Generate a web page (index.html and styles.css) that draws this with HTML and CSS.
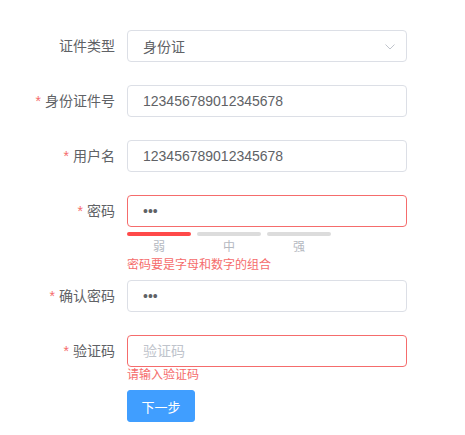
FILE: index.html
```html
<!DOCTYPE html>
<html lang="zh-CN">
<head>
<meta charset="utf-8">
<title>注册</title>
<link rel="stylesheet" href="styles.css">
</head>
<body>
<form class="form">
  <div class="form-item">
    <label class="label">证件类型</label>
    <div class="content">
      <div class="select">
        <input class="input" type="text" value="身份证" readonly>
        <svg class="chevron" width="10" height="6" viewBox="0 0 10 6"><path d="M0.5 0.5 L5 5 L9.5 0.5" fill="none" stroke="#c0c4cc" stroke-width="1"/></svg>
      </div>
    </div>
  </div>
  <div class="form-item">
    <label class="label"><span class="star">*</span>身份证件号</label>
    <div class="content">
      <input class="input" type="text" value="123456789012345678">
    </div>
  </div>
  <div class="form-item">
    <label class="label"><span class="star">*</span>用户名</label>
    <div class="content">
      <input class="input" type="text" value="123456789012345678">
    </div>
  </div>
  <div class="form-item">
    <label class="label"><span class="star">*</span>密码</label>
    <div class="content">
      <input class="input is-error" type="password" value="123">
      <div class="strength">
        <div class="level"><div class="bar bar-on"></div><div class="level-text">弱</div></div>
        <div class="level"><div class="bar"></div><div class="level-text">中</div></div>
        <div class="level"><div class="bar"></div><div class="level-text">强</div></div>
      </div>
      <div class="error">密码要是字母和数字的组合</div>
    </div>
  </div>
  <div class="form-item">
    <label class="label"><span class="star">*</span>确认密码</label>
    <div class="content">
      <input class="input" type="password" value="123">
    </div>
  </div>
  <div class="form-item">
    <label class="label"><span class="star">*</span>验证码</label>
    <div class="content">
      <input class="input is-error" type="text" placeholder="验证码">
      <div class="error">请输入验证码</div>
    </div>
  </div>
  <div class="form-item form-actions">
    <div class="label"></div>
    <div class="content">
      <button class="button" type="button">下一步</button>
    </div>
  </div>
</form>
</body>
</html>
```
FILE: styles.css
```css
* { box-sizing: border-box; }
html, body { margin: 0; padding: 0; background: #fff; }
body {
  font-family: "Liberation Sans", "Noto Sans CJK SC", sans-serif;
  font-size: 14px;
  color: #606266;
}
.form {
  padding-top: 30px;
  width: 465px;
}
.form-item {
  display: flex;
  margin-bottom: 23px;
}
.form-actions { margin-top: 1px; }
.label {
  width: 127px;
  flex: none;
  padding-right: 12px;
  text-align: right;
  line-height: 32px;
  font-size: 14px;
  color: #606266;
}
.star {
  color: #f56c6c;
  margin-right: 4px;
}
.content {
  position: relative;
  width: 280px;
}
.select { position: relative; }
.input {
  display: block;
  width: 100%;
  height: 32px;
  margin: 0;
  padding: 0 15px;
  border: 1px solid #dcdfe6;
  border-radius: 4px;
  font-family: inherit;
  font-size: 14px;
  color: #606266;
  background: #fff;
  outline: none;
}
.input::placeholder { color: #c0c4cc; }
.input.is-error { border-color: #f56c6c; }
.chevron {
  position: absolute;
  right: 12px;
  top: 14px;
}
.strength {
  display: flex;
  gap: 6px;
  margin-top: 5px;
  padding-bottom: 1px;
}
.level { width: 64px; }
.bar {
  height: 4px;
  border-radius: 2px;
  background: #dcdcdc;
}
.bar-on { background: #ff4949; }
.level-text {
  text-align: center;
  font-size: 12px;
  line-height: 18px;
  padding-top: 2px;
  color: #b4b8bf;
}
.error {
  position: absolute;
  left: 0;
  top: 100%;
  padding-top: 2px;
  font-size: 12px;
  line-height: 12px;
  color: #f56c6c;
  white-space: nowrap;
}
.button {
  width: 68px;
  height: 32px;
  border: 1px solid #409eff;
  border-radius: 3px;
  background: #409eff;
  color: #fff;
  font-family: inherit;
  font-size: 13px;
  padding: 0;
}
```
